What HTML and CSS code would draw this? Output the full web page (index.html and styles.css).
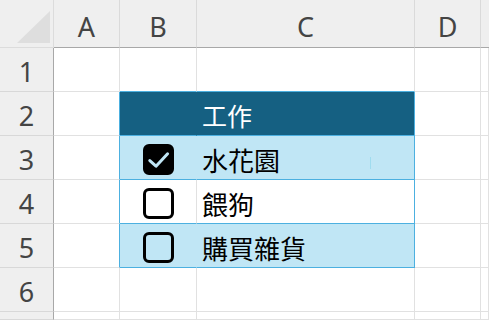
FILE: index.html
```html
<!DOCTYPE html>
<html lang="zh-Hant">
<head>
<meta charset="utf-8">
<title>工作</title>
<link rel="stylesheet" href="styles.css">
</head>
<body>
<div class="sheet">
  <!-- column header row -->
  <div class="corner"><span class="tri"></span></div>
  <div class="colhead">A</div>
  <div class="colhead">B</div>
  <div class="colhead">C</div>
  <div class="colhead">D</div>
  <div class="colhead last"></div>

  <!-- row 1 -->
  <div class="rowhead">1</div>
  <div class="cell"></div>
  <div class="cell tbl-top"></div>
  <div class="cell tbl-top"></div>
  <div class="cell"></div>
  <div class="cell"></div>

  <!-- row 2 -->
  <div class="rowhead">2</div>
  <div class="cell tbl-left"></div>
  <div class="cell thead nosep"></div>
  <div class="cell thead tbl-right text">工作</div>
  <div class="cell"></div>
  <div class="cell"></div>

  <!-- row 3 -->
  <div class="rowhead">3</div>
  <div class="cell tbl-left"></div>
  <div class="cell band nosep box">
    <svg class="chk" viewBox="0 0 31 31" width="31" height="31">
      <rect x="1.5" y="1.5" width="28" height="28" rx="4.5" fill="#000" stroke="#000" stroke-width="3"/>
      <path d="M6.8 16.6 L13 22.2 L24.6 9.8" fill="none" stroke="#c0e6f5" stroke-width="3" stroke-linecap="round" stroke-linejoin="round"/>
    </svg>
  </div>
  <div class="cell band tbl-right text">水花園<span class="caret"></span></div>
  <div class="cell"></div>
  <div class="cell"></div>

  <!-- row 4 -->
  <div class="rowhead">4</div>
  <div class="cell tbl-left"></div>
  <div class="cell plain box">
    <svg class="chk" viewBox="0 0 31 31" width="31" height="31">
      <rect x="1.5" y="1.5" width="28" height="28" rx="4.5" fill="#fff" stroke="#000" stroke-width="3"/>
    </svg>
  </div>
  <div class="cell plain tbl-right text">餵狗</div>
  <div class="cell"></div>
  <div class="cell"></div>

  <!-- row 5 -->
  <div class="rowhead">5</div>
  <div class="cell tbl-left"></div>
  <div class="cell band nosep box">
    <svg class="chk" viewBox="0 0 31 31" width="31" height="31">
      <rect x="1.5" y="1.5" width="28" height="28" rx="4.5" fill="#c0e6f5" stroke="#000" stroke-width="3"/>
    </svg>
  </div>
  <div class="cell band tbl-right text">購買雜貨</div>
  <div class="cell"></div>
  <div class="cell"></div>

  <!-- row 6 -->
  <div class="rowhead">6</div>
  <div class="cell"></div>
  <div class="cell"></div>
  <div class="cell"></div>
  <div class="cell"></div>
  <div class="cell"></div>

  <!-- row 7 (partial) -->
  <div class="rowhead"></div>
  <div class="cell"></div>
  <div class="cell"></div>
  <div class="cell"></div>
  <div class="cell"></div>
  <div class="cell"></div>
</div>
</body>
</html>
```
FILE: styles.css
```css
html, body {
  margin: 0;
  padding: 0;
  background: #ffffff;
  overflow: hidden;
}

.sheet {
  width: 489px;
  height: 320px;
  display: grid;
  grid-template-columns: 54px 66px 77px 218px 66px 1fr;
  grid-template-rows: 48px repeat(6, 44px) 1fr;
  font-family: "Noto Sans", "Open Sans", "Liberation Sans", sans-serif;
  overflow: hidden;
}

.corner {
  background: #efefef;
  border-right: 1px solid #dcdcdc;
  border-bottom: 1px solid #dcdcdc;
  position: relative;
}

.tri {
  position: absolute;
  left: 17px;
  top: 11px;
  width: 33px;
  height: 32px;
  background: #dedede;
  clip-path: polygon(100% 0, 100% 100%, 0 100%);
}

.colhead {
  background: #efefef;
  border-right: 1px solid #dadada;
  border-bottom: 1px solid #a8a8a8;
  color: #444444;
  font-size: 27px;
  display: flex;
  justify-content: center;
  align-items: center;
  padding-top: 6px;
  box-sizing: border-box;
}

.colhead.last {
  border-right: none;
}

.rowhead {
  background: #efefef;
  border-right: 1px solid #a8a8a8;
  border-bottom: 1px solid #d8d8d8;
  color: #444444;
  font-size: 27px;
  display: flex;
  justify-content: center;
  align-items: center;
  padding-top: 4px;
  box-sizing: border-box;
}

.cell {
  border-right: 1px solid #e1e1e1;
  border-bottom: 1px solid #e1e1e1;
  box-sizing: border-box;
  background: #ffffff;
}

.tbl-top {
  border-bottom-color: #4cb0e0;
}

.tbl-left {
  border-right-color: #4cb0e0;
}

.tbl-right {
  border-right-color: #4cb0e0;
}

.thead {
  background: #156082;
  border-bottom-color: #4cb0e0;
}

.thead.nosep {
  border-right-color: #156082;
}

.band {
  background: #c0e6f5;
  border-bottom-color: #4cb0e0;
}

.band.nosep {
  border-right-color: #c0e6f5;
}

.plain {
  border-bottom-color: #4cb0e0;
}

.plain.tbl-right {
  border-right-color: #4cb0e0;
}

.box {
  display: flex;
  justify-content: center;
  align-items: flex-start;
  padding-top: 8px;
}

.chk {
  display: block;
}

.text {
  display: flex;
  align-items: center;
  padding-left: 5px;
  padding-top: 4px;
  font-family: "Noto Sans CJK TC", "Noto Sans CJK SC", sans-serif;
  font-size: 26px;
  color: #000000;
  position: relative;
}

.thead.text {
  color: #ffffff;
  font-size: 25px;
  padding-top: 2px;
}

.caret {
  position: absolute;
  left: 173px;
  top: 21px;
  width: 1px;
  height: 12px;
  background: #9fdcef;
}
```
